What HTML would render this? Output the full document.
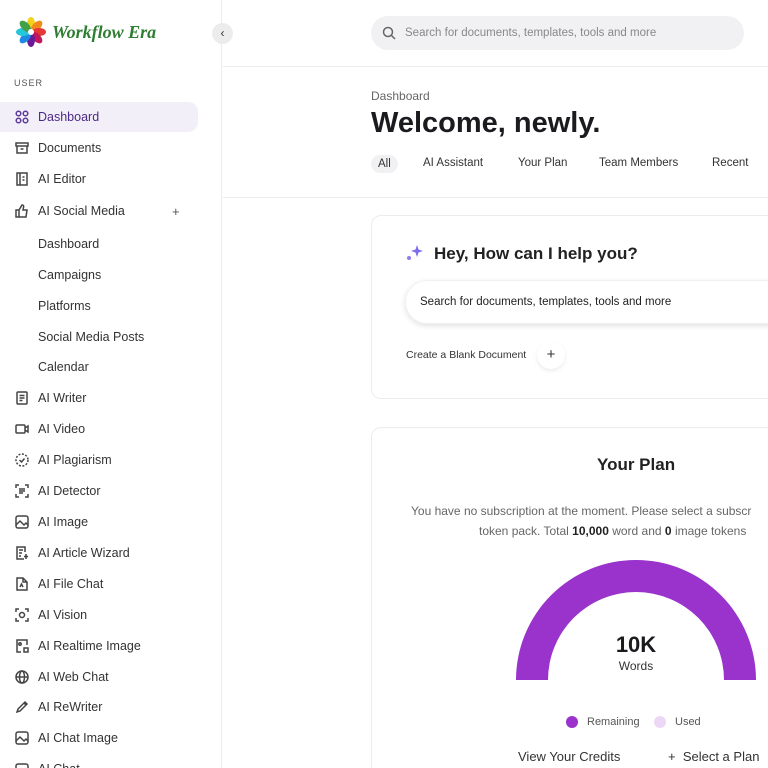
<!DOCTYPE html><html><head><meta charset="utf-8"><style>
*{margin:0;padding:0;box-sizing:border-box}
html,body{width:768px;height:768px;overflow:hidden}
body{background:#fff;font-family:"Liberation Sans",sans-serif;color:#1f1f23;position:relative}
.sb{position:absolute;left:0;top:0;width:222px;height:768px;border-right:1px solid #ececec}
.logo{position:absolute;left:15px;top:16px;display:flex;align-items:center}
.logo span{font-family:"Liberation Serif",serif;font-style:italic;font-weight:bold;color:#2e7d32;font-size:18px;margin-left:5px}
.coll{position:absolute;left:212px;top:23px;width:21px;height:21px;border-radius:50%;background:#ececec;font-size:12px;text-align:center;line-height:21px;color:#333}
.user{position:absolute;left:14px;top:78px;font-size:9px;letter-spacing:1px;color:#555}
.it{position:absolute;left:0;height:30px;width:198px;display:flex;align-items:center;font-size:12.5px;color:#333}
.it svg{position:absolute;left:15px;width:14px;height:14px;fill:none;stroke:#444;stroke-width:1.5}
.it b{font-weight:normal;position:absolute;left:38px}
.act{background:#f3eff8;border-radius:0 10px 10px 0;color:#4b2a86}
.act svg{stroke:#5b3a9b}
.top{position:absolute;left:223px;top:0;right:0;height:67px;border-bottom:1px solid #ececec}
.search{position:absolute;left:371px;top:16px;width:373px;height:34px;border-radius:17px;background:#f1f1f3;font-size:11.5px;color:#888;padding-left:34px;line-height:34px}
.hd{position:absolute;left:223px;top:67px;right:0;height:131px;border-bottom:1px solid #ececec}
.tabs{position:absolute;top:157px;font-size:11.5px;color:#333}
.card{position:absolute;left:371px;border:1px solid #ececec;border-radius:10px;width:420px}
</style></head><body>
<div class="sb">
<div class="logo"><svg width="32" height="32" viewBox="-16 -16 32 32">
<g><ellipse cx="0" cy="-8" rx="4" ry="7" fill="#f4d11a"/><ellipse cx="0" cy="-8" rx="4" ry="7" fill="#f08a1c" transform="rotate(45)"/><ellipse cx="0" cy="-8" rx="4" ry="7" fill="#e53935" transform="rotate(90)"/><ellipse cx="0" cy="-8" rx="4" ry="7" fill="#c2185b" transform="rotate(135)"/><ellipse cx="0" cy="-8" rx="4" ry="7" fill="#6a1b9a" transform="rotate(180)"/><ellipse cx="0" cy="-8" rx="4" ry="7" fill="#1e88e5" transform="rotate(225)"/><ellipse cx="0" cy="-8" rx="4" ry="7" fill="#26c6da" transform="rotate(270)"/><ellipse cx="0" cy="-8" rx="4" ry="7" fill="#43a047" transform="rotate(315)"/><circle r="3" fill="#fff"/></g></svg><span>Workflow Era</span></div>
<div class="user">USER</div>
<div class="it act" style="top:102px"><svg viewBox="0 0 14 14"><circle cx="3.5" cy="3.5" r="2.3"/><circle cx="10.5" cy="3.5" r="2.3"/><circle cx="3.5" cy="10.5" r="2.3"/><circle cx="10.5" cy="10.5" r="2.3"/></svg><b>Dashboard</b></div>
<div class="it" style="top:133px"><svg viewBox="0 0 14 14"><rect x="1" y="2" width="12" height="3"/><path d="M2 5v7h10V5M5.5 8h3"/></svg><b>Documents</b></div>
<div class="it" style="top:164px"><svg viewBox="0 0 14 14"><rect x="2" y="1" width="10" height="12"/><path d="M5 1v12M7.5 5h2M7.5 8h2"/></svg><b>AI Editor</b></div>
<div class="it" style="top:196px"><svg viewBox="0 0 14 14"><path d="M1 6h3v7H1zM4 6l3-5c1.5 0 2 1 1.5 2.5L8 6h4l-1 7H4"/></svg><b>AI Social Media</b><span style="position:absolute;left:172px;font-size:13px;color:#555">+</span></div>
<div class="it" style="top:229px"><b>Dashboard</b></div>
<div class="it" style="top:260px"><b>Campaigns</b></div>
<div class="it" style="top:291px"><b>Platforms</b></div>
<div class="it" style="top:322px"><b>Social Media Posts</b></div>
<div class="it" style="top:352px"><b>Calendar</b></div>
<div class="it" style="top:383px"><svg viewBox="0 0 14 14"><rect x="2" y="1" width="10" height="12" rx="1"/><path d="M4.5 4.5h5M4.5 7h5M4.5 9.5h3"/></svg><b>AI Writer</b></div>
<div class="it" style="top:414px"><svg viewBox="0 0 14 14"><rect x="1" y="3" width="9" height="8" rx="1"/><path d="M10 6l3-2v6l-3-2"/></svg><b>AI Video</b></div>
<div class="it" style="top:445px"><svg viewBox="0 0 14 14"><circle cx="7" cy="7" r="6" stroke-dasharray="2 1.5"/><path d="M4.5 7l2 2 3-3.5"/></svg><b>AI Plagiarism</b></div>
<div class="it" style="top:476px"><svg viewBox="0 0 14 14"><path d="M1 4V1h3M10 1h3v3M13 10v3h-3M4 13H1v-3M4 5h6M4 7h6M4 9h4"/></svg><b>AI Detector</b></div>
<div class="it" style="top:507px"><svg viewBox="0 0 14 14"><rect x="1" y="1" width="12" height="12" rx="2"/><path d="M1 10l4-4 4 4 2-2 2 2"/></svg><b>AI Image</b></div>
<div class="it" style="top:538px"><svg viewBox="0 0 14 14"><path d="M9 13H2V1h8v5M4 4h4M4 7h3M4 10h2"/><path d="M11 8v5M9 10.5h4"/></svg><b>AI Article Wizard</b></div>
<div class="it" style="top:569px"><svg viewBox="0 0 14 14"><path d="M2 1h6l4 4v8H2zM8 1v4h4M5 10l1.5-3 1.5 3"/></svg><b>AI File Chat</b></div>
<div class="it" style="top:600px"><svg viewBox="0 0 14 14"><path d="M1 4V1h3M10 1h3v3M13 10v3h-3M4 13H1v-3"/><circle cx="7" cy="7" r="2.5"/></svg><b>AI Vision</b></div>
<div class="it" style="top:631px"><svg viewBox="0 0 14 14"><path d="M6 13H2V1h10v5"/><circle cx="5" cy="5" r="1.2"/><path d="M9 9h4v4H9z"/></svg><b>AI Realtime Image</b></div>
<div class="it" style="top:662px"><svg viewBox="0 0 14 14"><circle cx="7" cy="7" r="6"/><ellipse cx="7" cy="7" rx="2.5" ry="6"/><path d="M1 7h12"/></svg><b>AI Web Chat</b></div>
<div class="it" style="top:692px"><svg viewBox="0 0 14 14"><path d="M2 12l1-3 7-7 2 2-7 7zM9 3l2 2"/></svg><b>AI ReWriter</b></div>
<div class="it" style="top:723px"><svg viewBox="0 0 14 14"><rect x="1" y="1" width="12" height="12" rx="2"/><path d="M1 10l4-4 4 4 2-2 2 2"/></svg><b>AI Chat Image</b></div>
<div class="it" style="top:754px"><svg viewBox="0 0 14 14"><rect x="1" y="2" width="12" height="9" rx="2"/></svg><b>AI Chat</b></div>
</div>
<div class="coll">‹</div>
<div class="top"></div>
<div class="search"><svg style="position:absolute;left:11px;top:10px" width="14" height="14" viewBox="0 0 14 14" fill="none" stroke="#666" stroke-width="1.5"><circle cx="6" cy="6" r="4.5"/><path d="M9.5 9.5l3.5 3.5"/></svg>Search for documents, templates, tools and more</div>
<div class="hd"></div>
<div style="position:absolute;left:371px;top:89px;font-size:12px;color:#666">Dashboard</div>
<div style="position:absolute;left:371px;top:107px;font-size:29px;font-weight:bold;color:#1a1a1f">Welcome, newly.</div>
<div class="tabs" style="left:371px;top:155px;background:#f1f1f3;border-radius:10px;padding:3px 7px">All</div>
<div class="tabs" style="left:423px">AI Assistant</div>
<div class="tabs" style="left:518px">Your Plan</div>
<div class="tabs" style="left:599px">Team Members</div>
<div class="tabs" style="left:712px">Recent</div>
<div class="card" style="top:215px;height:184px">
<svg style="position:absolute;left:33px;top:28px" width="20" height="18" viewBox="0 0 20 18"><path d="M12 1l1.5 4.5L18 7l-4.5 1.5L12 13l-1.5-4.5L6 7l4.5-1.5z" fill="#7b6cf0"/><circle cx="4" cy="14" r="2" fill="#8a7cf5"/></svg>
<div style="position:absolute;left:62px;top:28px;font-size:17px;font-weight:bold;color:#222">Hey, How can I help you?</div>
<div style="position:absolute;left:33px;top:64px;width:420px;height:44px;border-radius:22px;box-shadow:0 2px 6px rgba(0,0,0,.12);border:1px solid #f0f0f0;font-size:11.5px;line-height:42px;padding-left:14px;color:#222">Search for documents, templates, tools and more</div>
<div style="position:absolute;left:34px;top:133px;font-size:10.5px;color:#333">Create a Blank Document</div>
<div style="position:absolute;left:165px;top:125px;width:28px;height:28px;border-radius:50%;box-shadow:0 2px 5px rgba(0,0,0,.08);text-align:center;line-height:28px;font-size:15px;color:#333">+</div>
</div>
<div class="card" style="top:427px;height:360px">
<div style="position:absolute;left:225px;top:27px;font-size:17px;font-weight:bold;color:#222">Your Plan</div>
<div style="position:absolute;left:39px;top:73px;width:400px;font-size:12px;color:#666;line-height:20px;white-space:nowrap">You have no subscription at the moment. Please select a subscr<br><span style="padding-left:68px">token pack. Total <b style="color:#222">10,000</b> word and <b style="color:#222">0</b> image tokens</span></div>
</div>
<svg style="position:absolute;left:516px;top:560px" width="240" height="121" viewBox="0 0 240 121"><path d="M0 120A120 120 0 0 1 240 120H208A88 88 0 0 0 32 120Z" fill="#9933cc"/></svg>
<div style="position:absolute;left:596px;top:632px;width:80px;text-align:center;font-size:22px;font-weight:bold;color:#1a1a1f">10K</div>
<div style="position:absolute;left:596px;top:659px;width:80px;text-align:center;font-size:12px;color:#333">Words</div>
<div style="position:absolute;left:566px;top:716px;width:12px;height:12px;border-radius:50%;background:#9933cc"></div>
<div style="position:absolute;left:587px;top:716px;font-size:11px;color:#555">Remaining</div>
<div style="position:absolute;left:654px;top:716px;width:12px;height:12px;border-radius:50%;background:#ecd8f6"></div>
<div style="position:absolute;left:675px;top:716px;font-size:11px;color:#555">Used</div>
<div style="position:absolute;left:518px;top:749px;font-size:13px;color:#333">View Your Credits</div>
<div style="position:absolute;left:668px;top:749px;font-size:13px;color:#333">+&nbsp; Select a Plan</div>
</body></html>
